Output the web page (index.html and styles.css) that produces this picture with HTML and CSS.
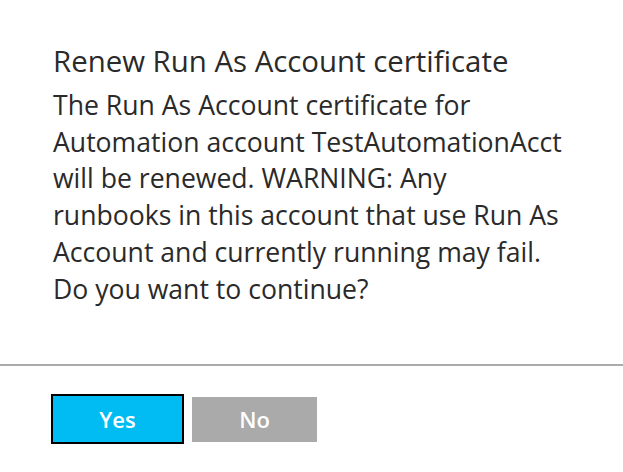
FILE: index.html
```html
<!DOCTYPE html>
<html>
<head>
<meta charset="utf-8">
<link rel="stylesheet" href="styles.css">
</head>
<body>
<div class="dialog">
  <div class="content">
    <h1 class="title">Renew Run As Account certificate</h1>
    <p class="message">The Run As Account certificate for<br>Automation account TestAutomationAcct<br>will be renewed. WARNING: Any<br>runbooks in this account that use Run As<br>Account and currently running may fail.<br>Do you want to continue?</p>
  </div>
  <div class="divider"></div>
  <div class="actions">
    <button class="btn btn-yes">Yes</button>
    <button class="btn btn-no">No</button>
  </div>
</div>
</body>
</html>
```

FILE: styles.css
```css
html, body {
  margin: 0;
  padding: 0;
  background: #ffffff;
}
.dialog {
  width: 623px;
  height: 472px;
  font-family: "Open Sans", "Noto Sans", sans-serif;
  color: #2a2a2a;
}
.content {
  padding: 43px 20px 56.8px 53px;
}
.title {
  margin: 0 0 8px 0;
  font-size: 29.4px;
  font-weight: 400;
  line-height: 36px;
  white-space: nowrap;
}
.message {
  margin: 0;
  font-size: 26.6px;
  line-height: 36.7px;
  white-space: nowrap;
}
.divider {
  height: 2px;
  background: #ababab;
}
.actions {
  display: flex;
  align-items: center;
  gap: 8px;
  padding: 28px 0 0 51px;
}
.btn {
  border: none;
  font-family: "Open Sans", "Noto Sans", sans-serif;
  font-weight: 600;
  font-size: 22px;
  color: #ffffff;
  padding: 0;
  display: flex;
  align-items: center;
  justify-content: center;
}
.btn-yes {
  width: 133px;
  height: 50px;
  background: #00bcf2;
  border: 2px solid #000000;
}
.btn-no {
  width: 125px;
  height: 45px;
  background: #aaaaaa;
}
```
